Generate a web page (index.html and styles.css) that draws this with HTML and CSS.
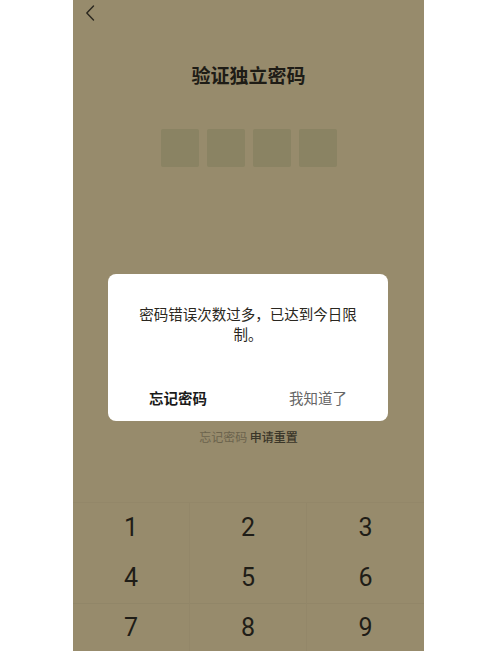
FILE: index.html
```html
<!DOCTYPE html>
<html lang="zh-CN">
<head>
<meta charset="utf-8">
<title>验证独立密码</title>
<link rel="stylesheet" href="styles.css">
</head>
<body>
<div class="phone">
  <div class="header">
    <svg class="back" width="10" height="16" viewBox="0 0 10 16"><path d="M8.5 1 L1.8 8 L8.5 15" fill="none" stroke="#2a271f" stroke-width="1.4" stroke-linecap="round" stroke-linejoin="round"/></svg>
  </div>
  <h1 class="title">验证独立密码</h1>
  <div class="boxes">
    <div class="box"></div>
    <div class="box"></div>
    <div class="box"></div>
    <div class="box"></div>
  </div>
  <div class="reset"><span class="muted">忘记密码</span> <span class="strong">申请重置</span></div>
  <div class="keypad">
    <div class="key">1</div><div class="key">2</div><div class="key">3</div>
    <div class="key">4</div><div class="key">5</div><div class="key">6</div>
    <div class="key">7</div><div class="key">8</div><div class="key">9</div>
  </div>

  <div class="dialog">
    <p class="message">密码错误次数过多，已达到今日限制。</p>
    <div class="actions">
      <div class="btn primary">忘记密码</div>
      <div class="btn secondary">我知道了</div>
    </div>
  </div>
</div>
</body>
</html>
```

FILE: styles.css
```css
html, body {
  margin: 0;
  padding: 0;
  background: #ffffff;
}
body {
  font-family: "Noto Sans CJK SC", "Noto Sans", sans-serif;
}
.phone {
  position: relative;
  width: 351px;
  height: 651px;
  margin-left: 73px;
  background: #978b6c;
  overflow: hidden;
}
.header {
  height: 26px;
  padding-left: 12px;
  padding-top: 5px;
  box-sizing: border-box;
}
.back {
  display: block;
}
.title {
  margin: 36px 0 0 0;
  font-size: 19px;
  line-height: 26px;
  font-weight: 700;
  text-align: center;
  color: #1e1c16;
}
.boxes {
  margin-top: 41px;
  display: flex;
  justify-content: center;
  gap: 8px;
}
.box {
  width: 38px;
  height: 38px;
  border-radius: 2px;
  background: #8a8363;
}
.reset {
  margin-top: 261px;
  text-align: center;
  font-size: 12px;
  line-height: 17px;
}
.muted {
  color: #6b634c;
}
.strong {
  color: #3a3629;
  font-weight: 500;
}
.keypad {
  margin-top: 57px;
  display: grid;
  grid-template-columns: repeat(3, 1fr);
  grid-template-rows: 50.5px 50.5px 48px;
  border-top: 1px solid rgba(0, 0, 0, 0.025);
}
.key {
  display: flex;
  align-items: center;
  justify-content: center;
  font-family: Roboto, "Noto Sans", sans-serif;
  font-size: 25px;
  line-height: 30px;
  color: #1f1d17;
  border-right: 1px solid rgba(0, 0, 0, 0.022);
}
.key:nth-child(3n) {
  border-right: none;
}
.key:nth-child(n+4):nth-child(-n+6) {
  border-bottom: 1px solid rgba(0, 0, 0, 0.03);
}
.dialog {
  position: absolute;
  left: 35px;
  top: 274px;
  width: 280px;
  height: 147px;
  background: #ffffff;
  border-radius: 8px;
  box-sizing: border-box;
  padding-top: 30px;
}
.message {
  margin: 0;
  padding: 0 30px;
  font-size: 14.5px;
  line-height: 20px;
  text-align: center;
  color: #2a2720;
}
.actions {
  margin-top: 29px;
  display: flex;
  height: 48px;
}
.btn {
  flex: 1;
  display: flex;
  align-items: center;
  justify-content: center;
  font-size: 14.5px;
}
.primary {
  font-weight: 700;
  color: #1a1a1a;
}
.secondary {
  color: #666666;
}
```
